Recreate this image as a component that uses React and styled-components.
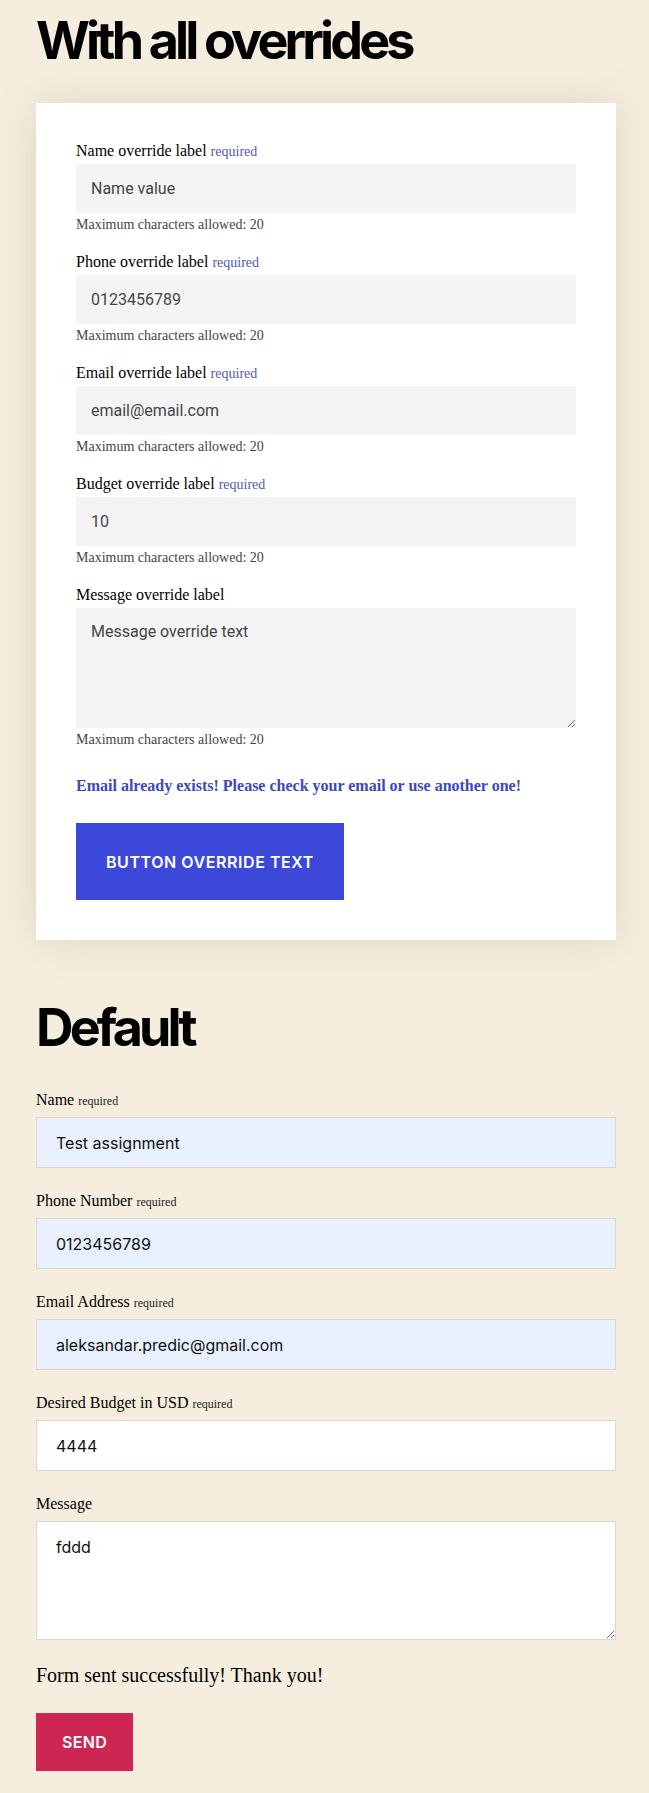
import React from "react";
import styled, { createGlobalStyle } from "styled-components";

const GlobalStyle = createGlobalStyle`
  html, body {
    margin: 0;
    padding: 0;
    background: #f5eedf;
  }
  body {
    font-family: "Liberation Serif", "Times New Roman", serif;
    color: #000;
  }
`;

const Page = styled.main`
  padding: 10px 33px 16px 36px;
  width: 580px;
`;

const Heading = styled.h1`
  margin: 0 0 ${(p) => p.$gap}px;
  font-family: Inter, sans-serif;
  font-weight: 700;
  font-size: 52px;
  line-height: 62px;
  letter-spacing: -0.074em;
  color: #000;
`;

const Card = styled.form`
  background: #fff;
  padding: 37px 40px 40px;
  box-shadow: 0 0 40px rgba(120, 100, 60, 0.18);
  margin-bottom: 57px;
  display: flex;
  flex-direction: column;
`;

const PlainForm = styled.form`
  display: flex;
  flex-direction: column;
`;

const Field = styled.div`
  display: flex;
  flex-direction: column;
  margin-bottom: ${(p) => p.$gap}px;
`;

const Label = styled.label`
  display: block;
  font-size: 16px;
  line-height: 22px;
  margin-bottom: ${(p) => p.$gap}px;
`;

const Required = styled.span`
  font-size: ${(p) => (p.$small ? "12px" : "14px")};
  line-height: 1;
  color: ${(p) => (p.$accent ? "#4f5bb4" : "#222")};
`;

const OverrideInput = styled.input`
  box-sizing: border-box;
  width: 100%;
  height: 49px;
  border: none;
  background: #f4f4f4;
  padding: 0 15px;
  font-family: Roboto, sans-serif;
  font-size: 16px;
  color: #444;
  outline: none;
`;

const OverrideArea = styled.textarea`
  box-sizing: border-box;
  width: 100%;
  height: 120px;
  border: none;
  background: #f4f4f4;
  padding: 14px 15px;
  font-family: Roboto, sans-serif;
  font-size: 16px;
  color: #444;
  resize: vertical;
  outline: none;
  display: block;
`;

const Helper = styled.div`
  font-size: 14px;
  line-height: 20px;
  padding-top: 2px;
  color: #444;
`;

const ErrorText = styled.p`
  margin: 25px 0 26px;
  font-size: 16px;
  line-height: 22px;
  font-weight: 700;
  color: #3c48c0;
`;

const Input = styled.input`
  box-sizing: border-box;
  width: 100%;
  height: 51px;
  border: 1px solid #dcd7ca;
  background: ${(p) => (p.$filled ? "#e8f0fe" : "#fff")};
  padding: 0 19px;
  font-family: Inter, sans-serif;
  font-size: 16px;
  color: #111;
  outline: none;
`;

const Area = styled.textarea`
  box-sizing: border-box;
  width: 100%;
  height: 119px;
  border: 1px solid #dcd7ca;
  background: #fff;
  padding: 15px 19px;
  font-family: Inter, sans-serif;
  font-size: 16px;
  color: #111;
  resize: vertical;
  outline: none;
  display: block;
`;

const Success = styled.p`
  margin: 24px 0 26px;
  font-size: 20px;
  line-height: 23px;
`;

const Button = styled.button`
  align-self: flex-start;
  border: none;
  cursor: pointer;
  color: #fff;
  font-family: Inter, sans-serif;
  font-weight: 600;
  font-size: 16px;
  letter-spacing: ${(p) => (p.$wide ? "0.035em" : "0.02em")};
  text-transform: uppercase;
  background: ${(p) => p.$bg};
  height: ${(p) => p.$h}px;
  padding: 0 ${(p) => p.$px}px;
`;

const overrideFields = [
  { label: "Name override label", value: "Name value" },
  { label: "Phone override label", value: "0123456789" },
  { label: "Email override label", value: "email@email.com" },
  { label: "Budget override label", value: "10" },
];

const defaultFields = [
  { label: "Name", value: "Test assignment", filled: true },
  { label: "Phone Number", value: "0123456789", filled: true },
  { label: "Email Address", value: "aleksandar.predic@gmail.com", filled: true },
  { label: "Desired Budget in USD", value: "4444" },
];

const App = () => {
  return (
    <Page>
      <GlobalStyle />
      <Heading $gap={31}>With all overrides</Heading>
      <Card onSubmit={(e) => e.preventDefault()}>
        {overrideFields.map((f) => (
          <Field key={f.label} $gap={16}>
            <Label $gap={2}>
              {f.label} <Required $accent>required</Required>
            </Label>
            <OverrideInput defaultValue={f.value} />
            <Helper>Maximum characters allowed: 20</Helper>
          </Field>
        ))}
        <Field $gap={0}>
          <Label $gap={2}>Message override label</Label>
          <OverrideArea defaultValue="Message override text" />
          <Helper>Maximum characters allowed: 20</Helper>
        </Field>
        <ErrorText>
          Email already exists! Please check your email or use another one!
        </ErrorText>
        <Button $bg="#3b48da" $h={77} $px={30} $wide>
          Button override text
        </Button>
      </Card>

      <Heading $gap={30}>Default</Heading>
      <PlainForm onSubmit={(e) => e.preventDefault()}>
        {defaultFields.map((f) => (
          <Field key={f.label} $gap={22}>
            <Label $gap={6}>
              {f.label} <Required $small>required</Required>
            </Label>
            <Input defaultValue={f.value} $filled={f.filled} />
          </Field>
        ))}
        <Field $gap={0}>
          <Label $gap={6}>Message</Label>
          <Area defaultValue="fddd" />
        </Field>
        <Success>Form sent successfully! Thank you!</Success>
        <Button $bg="#cd2653" $h={58} $px={26}>
          Send
        </Button>
      </PlainForm>
    </Page>
  );
};

export default App;
